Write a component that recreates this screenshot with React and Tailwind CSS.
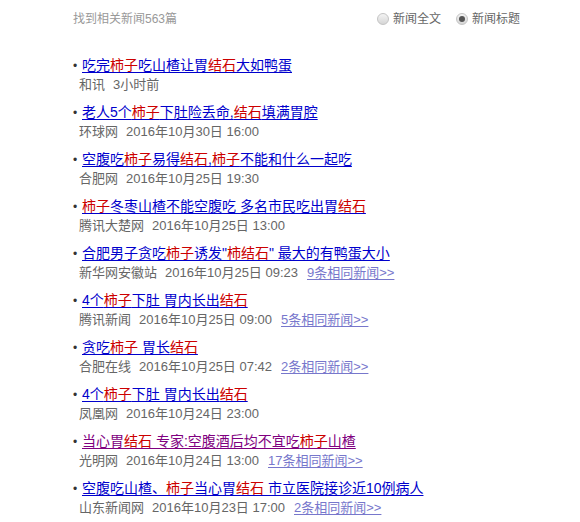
import React from "react";

const items = [
  { t: [["吃完"], ["柿子", 1], ["吃山楂让胃"], ["结石", 1], ["大如鸭蛋"]], src: "和讯", date: "3小时前" },
  { t: [["老人5个"], ["柿子", 1], ["下肚险丢命,"], ["结石", 1], ["填满胃腔"]], src: "环球网", date: "2016年10月30日 16:00" },
  { t: [["空腹吃"], ["柿子", 1], ["易得"], ["结石", 1], [","], ["柿子", 1], ["不能和什么一起吃"]], src: "合肥网", date: "2016年10月25日 19:30" },
  { t: [["柿子", 1], ["冬枣山楂不能空腹吃 多名市民吃出胃"], ["结石", 1]], src: "腾讯大楚网", date: "2016年10月25日 13:00" },
  { t: [["合肥男子贪吃"], ["柿子", 1], ["诱发\""], ["柿结石", 1], ["\" 最大的有鸭蛋大小"]], src: "新华网安徽站", date: "2016年10月25日 09:23", more: "9条相同新闻>>" },
  { t: [["4个"], ["柿子", 1], ["下肚 胃内长出"], ["结石", 1]], src: "腾讯新闻", date: "2016年10月25日 09:00", more: "5条相同新闻>>" },
  { t: [["贪吃"], ["柿子", 1], [" 胃长"], ["结石", 1]], src: "合肥在线", date: "2016年10月25日 07:42", more: "2条相同新闻>>" },
  { t: [["4个"], ["柿子", 1], ["下肚 胃内长出"], ["结石", 1]], src: "凤凰网", date: "2016年10月24日 23:00" },
  { t: [["当心胃"], ["结石", 1], [" 专家:空腹酒后均不宜吃"], ["柿子", 1], ["山楂"]], src: "光明网", date: "2016年10月24日 13:00", more: "17条相同新闻>>", visited: true },
  { t: [["空腹吃山楂、"], ["柿子", 1], ["当心胃"], ["结石", 1], [" 市立医院接诊近10例病人"]], src: "山东新闻网", date: "2016年10月23日 17:00", more: "2条相同新闻>>" },
];

function Radio({ checked, label }) {
  return (
    <label className="flex items-center gap-[4px]">
      <span className="w-[12px] h-[12px] rounded-full border border-[#c4c4c4] bg-gradient-to-b from-[#f4f4f4] to-[#d6d6d6] flex items-center justify-center">
        {checked && <span className="w-[6px] h-[6px] rounded-full bg-[#555]" />}
      </span>
      <span className="text-[12px] text-[#666]">{label}</span>
    </label>
  );
}

export default function App() {
  return (
    <div
      className="w-[580px] h-[522px] bg-white overflow-hidden"
      style={{ fontFamily: '"Liberation Sans", Arial, "Noto Sans CJK SC", sans-serif' }}
    >
      <div className="h-[38px] flex items-center pl-[73px]">
        <div className="text-[12px] text-[#999] w-[304px]">找到相关新闻563篇</div>
        <div className="flex items-center gap-[15px]">
          <Radio label="新闻全文" />
          <Radio checked label="新闻标题" />
        </div>
      </div>
      <ul className="mt-[18px] flex flex-col gap-[9px]">
        {items.map((it, i) => (
          <li key={i} className="flex flex-col">
            <div className="h-[19px] flex items-center pl-[73px]">
              <span className="w-[9px] text-[12px] leading-none text-[#333]">•</span>
              <a
                href="#"
                className={`text-[14px] leading-[19px] underline underline-offset-[2px] whitespace-pre ${
                  it.visited ? "text-[#800080]" : "text-[#0000cc]"
                }`}
              >
                {it.t.map(([s, red], j) =>
                  red ? (
                    <span key={j} className="text-[#cc0000]">
                      {s}
                    </span>
                  ) : (
                    <span key={j}>{s}</span>
                  )
                )}
              </a>
            </div>
            <div className="h-[19px] flex items-center pl-[79px] text-[13px] text-[#666] whitespace-pre">
              <span>{it.src}</span>
              <span className="ml-[8px]">{it.date}</span>
              {it.more && (
                <a href="#" className="ml-[9px] text-[#7777cc] underline underline-offset-[2px]">
                  {it.more}
                </a>
              )}
            </div>
          </li>
        ))}
      </ul>
    </div>
  );
}
